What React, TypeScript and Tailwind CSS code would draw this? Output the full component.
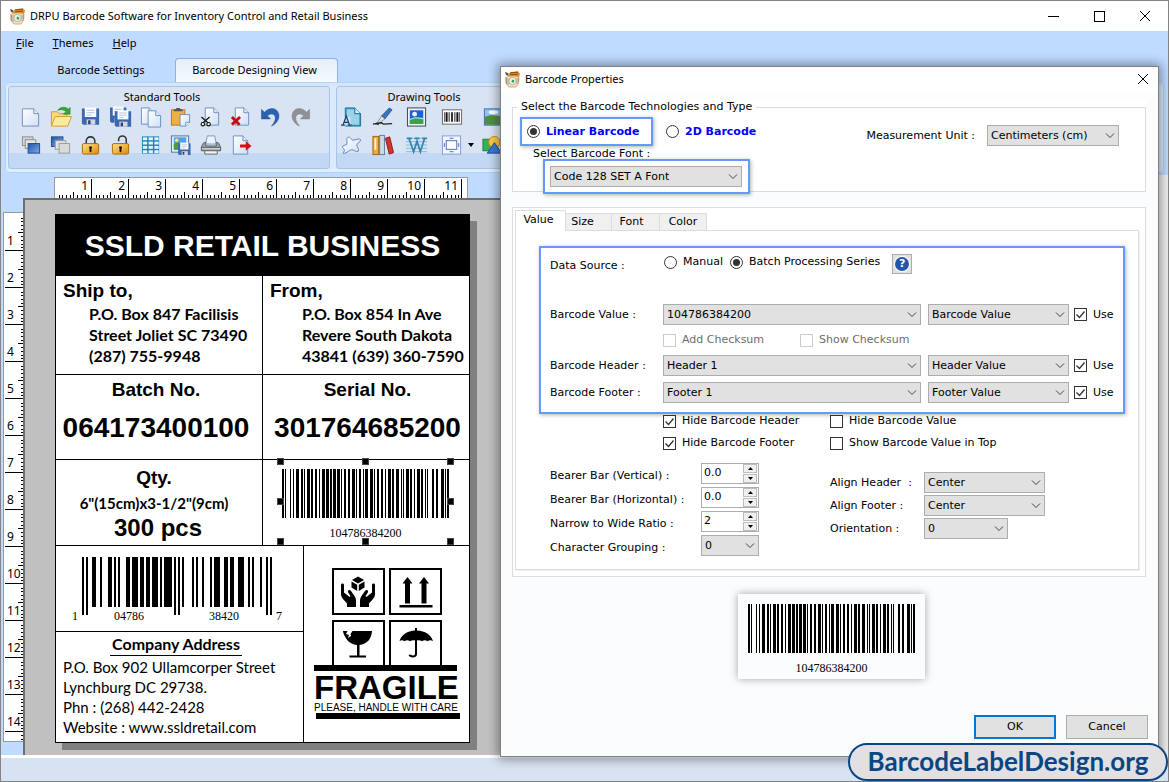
import React, { useId } from "react";

const DIALOG_FONT = "font-['DejaVu_Sans',Verdana,sans-serif]";
const UI_FONT = "font-['Noto_Sans','Open_Sans',sans-serif]";

/* ---------- barcodes ---------- */

const CODE128_DIGITS = [
  "123122", "123221", "223211", "221132", "221231",
  "213212", "223112", "312131", "311222", "321122",
];

function code128Bars(value: string) {
  const pattern =
    "211412" + value.split("").map((d) => CODE128_DIGITS[Number(d)]).join("") + "111422" + "2331112";
  const bars: { x: number; w: number }[] = [];
  let x = 0;
  pattern.split("").forEach((c, i) => {
    const w = Number(c);
    if (i % 2 === 0) bars.push({ x, w });
    x += w;
  });
  return { bars, width: x };
}

function Code128({ value }: { value: string }) {
  const { bars, width } = code128Bars(value);
  return (
    <figure className="flex flex-col items-center">
      <svg width={width} height="49" shapeRendering="crispEdges" aria-hidden="true">
        {bars.map((b) => (
          <rect key={b.x} x={b.x} y="0" width={b.w} height="49" fill="#000" />
        ))}
      </svg>
      <figcaption className="mt-2 font-['Liberation_Serif',serif] text-[12px] leading-[14px] text-black">
        {value}
      </figcaption>
    </figure>
  );
}

const UPC_LEFT = [
  "0001101", "0011001", "0010011", "0111101", "0100011",
  "0110001", "0101111", "0111011", "0110111", "0001011",
];

function UpcA({ value }: { value: string }) {
  const left = value.slice(0, 6).split("").map((d) => UPC_LEFT[Number(d)]).join("");
  const right = value
    .slice(6)
    .split("")
    .map((d) => UPC_LEFT[Number(d)].replace(/[01]/g, (b) => (b === "0" ? "1" : "0")))
    .join("");
  const modules = "101" + left + "01010" + right + "101";
  const isGuard = (i: number) => i < 3 || i > 91 || (i > 44 && i < 50);
  return (
    <figure className="flex w-[210px] flex-col">
      <svg className="self-center" width="190" height="58" shapeRendering="crispEdges" aria-hidden="true">
        {modules.split("").map((m, i) =>
          m === "1" ? (
            <rect key={i} x={i * 2} y="0" width="2" height={isGuard(i) ? 58 : 50} fill="#000" />
          ) : null
        )}
      </svg>
      <figcaption className="-mt-[6px] grid grid-cols-[14px_1fr_1fr_14px] font-['Liberation_Serif',serif] text-[12px] leading-[14px]">
        <span>{value[0]}</span>
        <span className="pl-7">{value.slice(1, 6)}</span>
        <span className="pl-8">{value.slice(6, 11)}</span>
        <span className="text-right">{value[11]}</span>
      </figcaption>
    </figure>
  );
}

/* ---------- icons ---------- */

function AppIcon() {
  return (
    <svg width="17" height="17" viewBox="0 0 17 17" aria-hidden="true">
      <path d="M1 1l3 1 1 3-3-1z" fill="#555" />
      <path d="M4 3l3-2 7-.5 2 2-1 4-10 1z" fill="#e0901f" />
      <path d="M6 2l8-1M6 4l8-1" stroke="#8a4b08" strokeWidth="1" />
      <path d="M1.500 6.500c3-2 11-2 13.500 0l-.5 6-2.500 3.500H5L2 12.500z" fill="#f3e3be" stroke="#d59a4c" strokeWidth=".8" />
      <path d="M2.500 7v6M4 7v7M13 7v6M14.500 7v4" stroke="#8f8f86" strokeWidth=".8" />
      <circle cx="8.500" cy="10" r="3.700" fill="#eef1ea" stroke="#a3a39b" strokeWidth=".8" />
      <path d="M8 8.500l2.500 1-1 2.500-2-1z" fill="#3f9b52" />
    </svg>
  );
}

function Defs() {
  return (
    <svg width="0" height="0" className="absolute" aria-hidden="true">
      <defs>
        <linearGradient id="paper" x1="0" y1="0" x2="1" y2="1">
          <stop offset="0" stopColor="#fff" />
          <stop offset="1" stopColor="#cfe0f5" />
        </linearGradient>
        <linearGradient id="blue" x1="0" y1="0" x2="1" y2="1">
          <stop offset="0" stopColor="#1f56a5" />
          <stop offset="1" stopColor="#7fa9e6" />
        </linearGradient>
        <linearGradient id="gold" x1="0" y1="0" x2="1" y2="1">
          <stop offset="0" stopColor="#ffe08a" />
          <stop offset="1" stopColor="#e08a00" />
        </linearGradient>
      </defs>
    </svg>
  );
}

const sheet = (x: number, y: number, w: number, h: number) => (
  <>
    <path
      d={`M${x} ${y}h${w - 5}l5 5v${h - 5}h-${w}z`}
      fill="url(#paper)"
      stroke="#6c8fc0"
    />
    <path d={`M${x + w - 5} ${y}v5h5`} fill="#e4eefa" stroke="#6c8fc0" />
  </>
);

const floppy = (x: number, y: number, s: number) => (
  <g transform={`translate(${x} ${y}) scale(${s})`}>
    <path d="M0 1h18v17H1.500L0 16.500z" fill="#3c67b1" />
    <path d="M3 0h12v10H3z" fill="#f7faff" />
    <path d="M5 3h8M5 5.500h8M5 8h5" stroke="#b3c3da" />
    <path d="M5 12.500h9V18H5z" fill="#d4d8de" />
    <path d="M6.500 13.500h2.500v4H6.500z" fill="#2a3f68" />
  </g>
);

const padlock = (open: boolean) => (
  <>
    <path
      d={open ? "M9 7V5.500a4 4 0 0 1 8 0V10" : "M6.500 10V7a4.500 4.500 0 0 1 9 0v3"}
      fill="none"
      stroke="#333"
      strokeWidth="1.600"
    />
    <rect x="2.500" y="9.500" width="17" height="11" rx="1.500" fill="url(#gold)" stroke="#a76a07" />
    <path d="M10 13h2v1h-.5v4h-1v-4H10z" fill="#111" stroke="#111" />
  </>
);

const ICONS: Record<string, React.ReactNode> = {
  New: sheet(2.5, 2.5, 17, 18),
  Open: (
    <>
      <path d="M1.500 20V5.500h6l2 2h8V20z" fill="#ffd970" stroke="#c79a33" />
      <path d="M1.500 20.500l4-10h17l-4 10z" fill="#ffe9a3" stroke="#d0a030" />
      <path d="M8 4c3-4 9-4 11-1l2-2v7h-7l2.500-2.500C15 3 11 3 8 4z" fill="#3aa63a" stroke="#1f7a25" strokeWidth=".6" />
    </>
  ),
  Save: floppy(2, 1, 1),
  "Save all": (
    <>
      {floppy(0, 0, 0.95)}
      {floppy(5, 4, 0.95)}
    </>
  ),
  Copy: (
    <>
      {sheet(1.5, 1.5, 13, 17)}
      {sheet(8.5, 4.5, 13, 17)}
    </>
  ),
  Paste: (
    <>
      <rect x="1.500" y="3.500" width="14" height="16" fill="#f0b040" stroke="#b5781c" />
      <path d="M4 5V3h2.500V1.500h4V3H13v2z" fill="#555" />
      <path d="M10.500 8.500h10v8l-4 4h-6z" fill="url(#paper)" stroke="#6c8fc0" />
      <path d="M20.500 16.500h-4v4" fill="#fff" stroke="#6c8fc0" />
    </>
  ),
  Cut: (
    <>
      {sheet(5.5, 1.5, 14, 18)}
      <path d="M1.500 11l8 7M10 11l-8 7" stroke="#111" strokeWidth="1.300" />
      <circle cx="3" cy="18.500" r="1.800" fill="#fff" stroke="#111" strokeWidth="1.200" />
      <circle cx="9" cy="18.500" r="1.800" fill="#fff" stroke="#111" strokeWidth="1.200" />
    </>
  ),
  Delete: (
    <>
      {sheet(5.5, 1.5, 14, 18)}
      <path d="M2 11l8 8M10.500 11l-8.500 8" stroke="#c40d12" strokeWidth="3" />
    </>
  ),
  Undo: (
    <path d="M1.500 3v10h9.500l-3.200-3.300c3-2.800 8-2.400 8.200 2.300.1 3-2 6-4 8.500 5.500-2.500 9-8 7.500-13C17.500 1 9.500.5 4.800 6z" fill="#2b62b0" stroke="#1e4d92" strokeWidth=".5" />
  ),
  Redo: (
    <path d="M20.500 3v10H11l3.200-3.300c-3-2.800-8-2.400-8.200 2.300-.1 3 2 6 4 8.500-5.500-2.500-9-8-7.500-13C4.500 1 12.500.5 17.200 6z" fill="#8f9194" stroke="#7a7c80" strokeWidth=".5" />
  ),
  "Bring to front": (
    <>
      <rect x="2.500" y="2.500" width="11" height="9" fill="#d5d5d5" stroke="#8c8c8c" />
      <rect x="5.500" y="5.500" width="11" height="9" fill="#e3e3e3" stroke="#8c8c8c" />
      <rect x="8.500" y="9.500" width="12" height="10" fill="url(#blue)" stroke="#1c4b93" />
    </>
  ),
  "Send to back": (
    <>
      <rect x="1.500" y="2.500" width="12" height="10" fill="url(#blue)" stroke="#1c4b93" />
      <rect x="5.500" y="6.500" width="11" height="9" fill="#e3e3e3" stroke="#9a9a9a" />
      <rect x="9.500" y="9.500" width="11" height="10" fill="#dadada" stroke="#9a9a9a" />
    </>
  ),
  Lock: padlock(false),
  Unlock: padlock(true),
  Grid: (
    <>
      <rect x="2" y="2" width="18" height="18" fill="#1f86b4" />
      {[3, 7.5, 12, 16.5].map((y) =>
        [3, 9, 15].map((x) => <rect key={`${x}-${y}`} x={x} y={y} width="4.500" height="3" fill="#dff4ff" />)
      )}
    </>
  ),
  "Export image": (
    <>
      <rect x="1.500" y="1.500" width="18" height="17" fill="#e8eef6" stroke="#4a6ea8" />
      <rect x="4" y="3" width="13" height="13" fill="#4fa3e6" />
      <path d="M4 10l4-2 4 3 5-1v6H4z" fill="#4f9a3c" />
      <circle cx="7" cy="6" r="1.800" fill="#ffe45c" />
      {floppy(8.5, 8.5, 0.72)}
    </>
  ),
  Print: (
    <>
      <path d="M6 10L7.500 1.500h8L17 10z" fill="#e9f2fd" stroke="#7f99bf" />
      <path d="M3.500 9l-2 4v4h20v-4l-2-4-2.500-1v4H6V8z" fill="#9a9ea5" stroke="#5e636b" />
      <path d="M1.500 13.500h20v3h-20z" fill="#c9cdd3" stroke="#5e636b" />
      <path d="M5 17h13v3.500H5z" fill="#f3f3f3" stroke="#666" />
    </>
  ),
  Exit: (
    <>
      {sheet(3.5, 1.5, 15, 19)}
      <path d="M10.500 10.500h6V7l6 5-6 5v-3.500h-6z" fill="#d01216" />
    </>
  ),
  Text: (
    <>
      <path d="M4.500 1.500h10l6 6v13h-16z" fill="#3f9fc8" stroke="#1f7096" />
      <path d="M6 3h8v5h5v11H6z" fill="#a9dcf0" opacity=".85" />
      <path d="M14.500 1.500v6h6" fill="#d6f1fb" stroke="#1f7096" />
      <path d="M0 11h10v9H0z" fill="#dcebf8" opacity=".75" />
      <path d="M2 19.500L5.500 10l3.500 9.500M3.500 16.500h4M0 19.500h4M7 19.500h4" fill="none" stroke="#163f6b" strokeWidth="1.300" />
    </>
  ),
  Pencil: (
    <>
      <path d="M10 10L18 1.500l3 2L13.500 13z" fill="#3b73c2" stroke="#1b3f77" strokeWidth=".7" />
      <path d="M10 10l3.500 3L7 17.500 5.500 17z" fill="#e4e4e4" stroke="#555" strokeWidth=".6" />
      <path d="M1 18.500l9-1.500 2 1.500 9-.5M4 17.500l3 1.500" fill="none" stroke="#222" strokeWidth="1.400" />
    </>
  ),
  Picture: (
    <>
      <rect x="1.500" y="1.500" width="19" height="19" fill="#eef1f5" stroke="#37424f" />
      <rect x="4" y="4" width="14" height="14" fill="#1b62d6" />
      <path d="M4 14c4-3 9-2 14-1v5H4z" fill="#3da33c" />
      <path d="M4 13c4-2.500 9-2 14-1v1.500c-5-1-10-1.500-14 1z" fill="#9be0f5" />
      <circle cx="9" cy="8" r="2.500" fill="#eaf6ff" />
    </>
  ),
  Barcode: (
    <>
      <rect x="1.500" y="3.500" width="20" height="15" fill="#fff" stroke="#666" />
      <path d="M4 6v10M8.500 6v10M14.500 6v10M19 6v10" stroke="#111" strokeWidth="1" />
      <path d="M6 6v10M11.500 6v10M17 6v10" stroke="#111" strokeWidth="1.800" />
    </>
  ),
  Gallery: (
    <>
      <rect x="2.500" y="2.500" width="19" height="17" fill="#8cc8f0" stroke="#3c6ea8" />
      <path d="M3 11c5-3 12-2 18 0v8H3z" fill="#4f8f3d" />
      <ellipse cx="12" cy="6" rx="5" ry="2" fill="#fff" />
      <ellipse cx="19" cy="14" rx="4" ry="2.500" fill="#777" />
    </>
  ),
  Freeform: (
    <path d="M2 19.500c2-2 2-4-.5-6 0-2.500 3-2 4.500-3 1-3-1-6 1-7.500 3-1.500 3.500 3 5.500 3 2.500 0 6-2.500 8-.5.500 2.500-4 3-4 5.500 0 2 3 4.500 1.500 6.500-2.500 1.500-4.500-2-7-1.500-3 .5-6.500 5-9 3.500z" fill="url(#paper)" stroke="#5b83c4" />
  ),
  Library: (
    <>
      <rect x="1" y="2" width="6" height="19" fill="#f4a73b" stroke="#a56209" />
      <rect x="2.500" y="4" width="2" height="12" fill="#fff3d6" />
      <rect x="8" y="1" width="5" height="20" fill="#cdd9ee" stroke="#6678a0" />
      <path d="M14 4l4.500-1.500L22.500 19l-4.500 1.500z" fill="#d0352d" stroke="#8c1c16" />
    </>
  ),
  Watermark: (
    <>
      <path d="M0 4h22M0 7.500h22M0 11h22M0 14.500h22M0 18h22" stroke="#7cbcdc" />
      <path d="M3 4l5 14 3.500-11L15 18l4.500-14M1 4h5M9 4h5M17 4h5" fill="none" stroke="#3187ad" strokeWidth="1.800" />
    </>
  ),
  Frame: (
    <>
      <rect x="1.500" y="1.500" width="19" height="19" fill="#f3f7fd" stroke="#7f9fd0" />
      <rect x="5.500" y="6.500" width="11" height="9" fill="#fff" stroke="#4f6f9e" />
      <path d="M9 4h4M9 18h4M3.500 9v4M18.500 9v4" stroke="#4f6f9e" strokeWidth="1" />
    </>
  ),
  Shapes: (
    <>
      <rect x="1" y="5" width="9" height="12" fill="#37b257" stroke="#1f7b37" />
      <circle cx="13" cy="8" r="6" fill="#ffca45" stroke="#c48a10" />
      <path d="M13 8.500L20.500 19.500h-15z" fill="#3f78d6" stroke="#1e4d9c" />
    </>
  ),
};

function ToolButton({ name, menu = false }: { name: string; menu?: boolean }) {
  return (
    <button type="button" aria-label={name} className="relative flex h-7 items-center justify-center">
      <svg width="22" height="22" viewBox="0 0 23 22" aria-hidden="true">
        {ICONS[name]}
      </svg>
      {menu && (
        <svg className="absolute right-[-5px] top-3" width="6" height="4" aria-hidden="true">
          <path d="M0 0h6L3 4z" fill="#000" />
        </svg>
      )}
    </button>
  );
}

/* ---------- main window ---------- */

function TitleBar() {
  const control = "flex w-[46px] items-center justify-center";
  return (
    <header className="flex h-[30px] bg-white">
      <div className="flex items-center gap-1 pl-2">
        <AppIcon />
        <h1 className={`${UI_FONT} text-[11px] text-black`}>
          DRPU Barcode Software for Inventory Control and Retail Business
        </h1>
      </div>
      <div className="ml-auto flex">
        <button type="button" aria-label="Minimize" className={control}>
          <svg width="11" height="11" shapeRendering="crispEdges"><path d="M0 5.500h11" stroke="#000" /></svg>
        </button>
        <button type="button" aria-label="Maximize" className={control}>
          <svg width="11" height="11" shapeRendering="crispEdges"><path d="M.5.500h10v10H.5z" fill="none" stroke="#000" /></svg>
        </button>
        <button type="button" aria-label="Close window" className={control}>
          <svg width="12" height="12"><path d="M1 1l10 10M11 1L1 11" stroke="#000" /></svg>
        </button>
      </div>
    </header>
  );
}

function MenuBar() {
  return (
    <nav className={`${UI_FONT} flex h-6 items-center gap-[19px] pl-[15px] text-[11px] text-black`}>
      <button type="button"><u>F</u>ile</button>
      <button type="button"><u>T</u>hemes</button>
      <button type="button"><u>H</u>elp</button>
    </nav>
  );
}

function ToolGroup({
  title,
  className,
  titleClass = "",
  children,
}: {
  title: string;
  className: string;
  titleClass?: string;
  children: React.ReactNode;
}) {
  return (
    <section
      className={`${className} rounded-[3px] border border-[#a5c4ec] bg-linear-to-b from-[#d8e4f3] from-82% to-[#c3d8f2] to-82%`}
    >
      <h2 className={`${UI_FONT} ${titleClass} h-4 text-center text-[11px] leading-5 text-black`}>{title}</h2>
      {children}
    </section>
  );
}

const STANDARD_TOOLS = [
  "New", "Open", "Save", "Save all", "Copy", "Paste", "Cut", "Delete", "Undo", "Redo",
  "Bring to front", "Send to back", "Lock", "Unlock", "Grid", "Export image", "Print", "Exit",
];
const DRAWING_TOOLS = [
  "Text", "Pencil", "Picture", "Barcode", "Gallery",
  "Freeform", "Library", "Watermark", "Frame", "Shapes",
];

function Ribbon() {
  return (
    <>
      <div className={`${UI_FONT} mt-[3px] flex h-6 pl-10 text-[11px] text-black`} role="tablist">
        <button type="button" role="tab" aria-selected="false" className="w-[120px]">
          Barcode Settings
        </button>
        <button
          type="button"
          role="tab"
          aria-selected="true"
          className="ml-[14px] w-[163px] rounded-t-[4px] border border-b-0 border-[#8db2e3] bg-linear-to-b from-[#e6eefb] to-[#f6faff] pr-1"
        >
          Barcode Designing View
        </button>
      </div>
      <div className="mx-1 flex h-[91px] gap-[6px] rounded-[4px] border-y-4 border-x-3 border-[#e0edfd] border-t-[#d6e6fa] bg-[#dcebfc] outline-1 -outline-offset-1 outline-[#b5d1f5]">
        <ToolGroup title="Standard Tools" className="w-[322px] shrink-0" titleClass="pr-[14px]">
          <div className="grid grid-cols-[repeat(10,30px)] pl-[7px]">
            {STANDARD_TOOLS.map((name) => (
              <ToolButton key={name} name={name} />
            ))}
          </div>
        </ToolGroup>
        <ToolGroup title="Drawing Tools" className="w-[176px] shrink-0">
          <div className="grid grid-cols-[30px_32px_36px_34px_48px]">
            {DRAWING_TOOLS.map((name) => (
              <ToolButton key={name} name={name} menu={name === "Frame"} />
            ))}
          </div>
        </ToolGroup>
      </div>
    </>
  );
}

const TICKS = [4, 7, 11, 15, 18, 22, 26, 30, 33];

function TopRuler() {
  return (
    <div className={`${UI_FONT} ml-[53px] flex h-[21px] w-[414px] overflow-hidden border border-b-0 border-[#9a9a9a] bg-white text-black`}>
      {Array.from({ length: 11 }, (_, i) => (
        <div key={i} className="relative w-[37px] shrink-0 pt-px pr-1 text-right text-[12px] leading-[14px]">
          {i + 1}
          <svg className="absolute inset-0" width="37" height="20" shapeRendering="crispEdges" aria-hidden="true">
            {TICKS.map((t) => (
              <path key={t} d={`M${t + 0.5} ${t === 18 ? 14 : 17}V20`} stroke="#000" />
            ))}
            <path d="M36.500 1V20" stroke="#000" />
          </svg>
        </div>
      ))}
    </div>
  );
}

function SideRuler() {
  return (
    <div className={`${UI_FONT} mt-[14px] ml-[2px] h-[530px] w-5 overflow-hidden border border-r-0 border-[#9a9a9a] bg-white pt-px text-black`}>
      {Array.from({ length: 14 }, (_, i) => (
        <div key={i} className="relative flex h-[37px] items-end pb-[3px] pl-[3px] text-[12px] leading-[14px]">
          {i + 1}
          <svg className="absolute inset-0" width="19" height="37" shapeRendering="crispEdges" aria-hidden="true">
            {TICKS.map((t) => (
              <path key={t} d={`M${t === 18 ? 14 : 17} ${t + 0.5}H19`} stroke="#000" />
            ))}
            <path d="M1 36.500H19" stroke="#000" />
          </svg>
        </div>
      ))}
      <svg width="19" height="10" shapeRendering="crispEdges" aria-hidden="true">
        <path d="M17 3.500H19M17 7.500H19" stroke="#000" />
      </svg>
    </div>
  );
}

/* ---------- shipping label ---------- */

function PartyCell({ title, lines, indent }: { title: string; lines: string[]; indent: string }) {
  return (
    <div className="h-full pl-[7px] pt-[2px]">
      <h4 className="text-[19px] font-bold leading-[25px]">{title}</h4>
      <p className={`${indent} whitespace-nowrap font-[Lato,sans-serif] text-[16px] font-bold leading-[21px]`}>
        {lines.map((l) => (
          <span key={l} className="block">{l}</span>
        ))}
      </p>
    </div>
  );
}

function NumberCell({ title, value, className }: { title: string; value: string; className: string }) {
  return (
    <div className={`pt-[3px] text-center font-bold ${className}`}>
      <h4 className="text-[19px] leading-6">{title}</h4>
      <p className="mt-[10px] text-[28px] leading-8">{value}</p>
    </div>
  );
}

const HANDLES = [
  "-left-1 -top-1", "left-1/2 -ml-1 -top-1", "-right-1 -top-1",
  "-left-1 top-1/2 -mt-1", "-right-1 top-1/2 -mt-1",
  "-left-1 -bottom-1", "left-1/2 -ml-1 -bottom-1", "-right-1 -bottom-1",
];

function HandlingSymbols() {
  return (
    <svg width="110" height="98" viewBox="0 0 110 98" aria-label="Handling symbols" role="img">
      <g fill="none" stroke="#000" strokeWidth="2">
        <path d="M1 1h51v45H1zM58 1h51v45H58zM1 53h51v45H1zM58 53h51v45H58z" />
      </g>
      <g fill="#000">
        <path d="M26 8.500l6 3.500-6 3.500-6-3.500zM19.500 13.500l5.700 3.300v6.200l-5.700-3.500zM32.500 13.500l-5.700 3.300v6.200l5.700-3.500z" />
        <path d="M12 17c0-2-3-2-3 0v9c0 2 .8 3.500 2 5l4 4.500V39h9v-6c0-2-.5-3.500-1.500-5L19 23c-1.500-1.800-4-.6-2.800 1.500l2.300 3.700-.8.800-5.700-4.500z" />
        <path d="M40 17c0-2 3-2 3 0v9c0 2-.8 3.500-2 5l-4 4.500V39h-9v-6c0-2 .5-3.500 1.500-5l3.500-5c1.500-1.800 4-.6 2.800 1.500l-2.300 3.700.8.800 5.700-4.500z" />
        <path d="M75.500 9l5 6.500H78v20h-5v-20h-2.500zM92 9l5 6.500h-2.500v20h-5v-20H87zM67.500 37h33v2.600h-33z" />
        <path d="M11 63h4.500l-1.500 3 3 1-1 3 3-2-.5-2 2-3H40c-.5 8-5 13-12.500 14v10.500H34v2H17.500v-2H25V77c-5-.7-9-3-11.500-7.500C12 67 11.200 65 11 63z" />
        <path d="M83 62.500V60h2v2.500c8 .6 14 4 16 10.500-2-1.200-4-1-5.500.3-1.500-1.500-4-1.500-5.500 0-1.200-.8-3-1.200-5-.8v13.800c0 4-7.500 4.500-8.500.5h2.500c.8 1.300 4 1 4-1V72.500c-2-.4-3.800 0-5 .8-1.500-1.500-4-1.500-5.500 0-1.500-1.300-3-1.500-5-.3 2-6.500 8-10 15.500-10.500z" />
      </g>
    </svg>
  );
}

function ShippingLabel() {
  return (
    <article className="w-[415px] border border-black bg-white font-['Liberation_Sans',Arial,sans-serif] text-black shadow-[7px_7px_0_#808080]">
      <h3 className="flex h-[61px] items-center justify-center bg-black text-[30px] font-bold leading-8 text-white">
        SSLD RETAIL BUSINESS
      </h3>
      <div className="grid grid-cols-[207px_1fr]">
        <div className="h-[99px] border-r border-b border-black">
          <PartyCell
            title="Ship to,"
            lines={["P.O. Box 847 Facilisis", "Street Joliet SC 73490", "(287) 755-9948"]}
            indent="pl-[26px]"
          />
        </div>
        <div className="border-b border-black">
          <PartyCell
            title="From,"
            lines={["P.O. Box 854 In Ave", "Revere South Dakota", "43841 (639) 360-7590"]}
            indent="pl-8"
          />
        </div>
        <div className="h-[85px] border-r border-b border-black">
          <NumberCell title="Batch No." value="064173400100" className="pr-[6px]" />
        </div>
        <div className="border-b border-black">
          <NumberCell title="Serial No." value="301764685200" className="pl-[3px]" />
        </div>
        <div className="h-[86px] border-r border-b border-black pr-[10px] pt-[6px] text-center font-bold">
          <h4 className="text-[19px] leading-6">Qty.</h4>
          <p className="font-[Lato,sans-serif] text-[15px] leading-[26px]">6&quot;(15cm)x3-1/2&quot;(9cm)</p>
          <p className="pl-2 text-[24px] leading-6">300 pcs</p>
        </div>
        <div className="flex justify-center border-b border-black pr-px pt-[2px]">
          <div className="relative flex h-[79px] w-[169px] justify-center pt-[7px]">
            <Code128 value="104786384200" />
            {HANDLES.map((pos) => (
              <span key={pos} className={`absolute size-[7px] border border-[#444] bg-black ${pos}`} />
            ))}
          </div>
        </div>
      </div>
      <div className="grid grid-cols-[248px_1fr]">
        <div className="border-r border-black">
          <div className="flex h-[86px] border-b border-black pl-4 pt-[11px]">
            <UpcA value="104786384207" />
          </div>
          <div className="h-[110px] pl-[7px] pt-px font-[Lato,sans-serif]">
            <h4 className="ml-[47px] w-[132px] border-b border-black text-center text-[16px] font-bold leading-[22px]">
              Company Address
            </h4>
            <p className="mt-px whitespace-nowrap text-[15px] leading-5">
              P.O. Box 902 Ullamcorper Street
              <br />
              Lynchburg DC 29738.
              <br />
              Phn : (268) 442-2428
              <br />
              Website : www.ssldretail.com
            </p>
          </div>
        </div>
        <div className="flex flex-col pl-[10px] pt-[22px]">
          <div className="h-[97px] pl-[18px]">
            <HandlingSymbols />
          </div>
          <div className="h-[6px] w-[143px] bg-black" />
          <p className="mt-px text-[33px] font-bold leading-[31px]">FRAGILE</p>
          <p className="whitespace-nowrap text-[10px] leading-[10px]">PLEASE, HANDLE WITH CARE</p>
          <div className="ml-[2px] h-[6px] w-[144px] bg-black" />
        </div>
      </div>
    </article>
  );
}

/* ---------- dialog controls ---------- */

function Select({ id, value, className, label }: { id?: string; value: string; className: string; label?: string }) {
  return (
    <span className={`relative block h-[21px] ${className}`}>
      <select
        id={id}
        aria-label={label}
        defaultValue={value}
        className="h-full w-full appearance-none border border-[#adadad] bg-[#e1e1e1] pl-[3px] pr-5 text-[11px] text-black"
      >
        <option>{value}</option>
      </select>
      <svg className="pointer-events-none absolute right-[4px] top-2" width="10" height="6" aria-hidden="true">
        <path d="M1 .5l4 4 4-4" fill="none" stroke="#444" />
      </svg>
    </span>
  );
}

function Check({ label, checked = false, disabled = false }: { label: string; checked?: boolean; disabled?: boolean }) {
  return (
    <label className={`flex items-center gap-[6px] whitespace-nowrap ${disabled ? "text-[#6d6d6d]" : "text-black"}`}>
      <span className="grid size-[13px] shrink-0">
        <input
          type="checkbox"
          defaultChecked={checked}
          disabled={disabled}
          className="col-start-1 row-start-1 size-[13px] appearance-none border border-[#333] bg-white disabled:border-[#ccc]"
        />
        {checked && (
          <svg className="pointer-events-none col-start-1 row-start-1" width="13" height="13" aria-hidden="true">
            <path d="M2.500 6.500l3 3 5-6" fill="none" stroke="#333" strokeWidth="1.300" />
          </svg>
        )}
      </span>
      {label}
    </label>
  );
}

function Radio({ label, name, checked = false }: { label: string; name: string; checked?: boolean }) {
  return (
    <label className="flex items-center gap-[6px] whitespace-nowrap">
      <span className="grid size-[13px] shrink-0">
        <input
          type="radio"
          name={name}
          defaultChecked={checked}
          className="col-start-1 row-start-1 size-[13px] appearance-none rounded-full border border-[#333] bg-white"
        />
        {checked && (
          <span className="pointer-events-none col-start-1 row-start-1 size-[7px] place-self-center rounded-full bg-[#333]" />
        )}
      </span>
      {label}
    </label>
  );
}

function Spinner({ id, value }: { id: string; value: string }) {
  const btn = "flex h-[9px] w-[14px] items-center justify-center border border-[#bcbcbc] bg-[#f0f0f0]";
  return (
    <span className="flex h-[21px] w-[58px] border border-[#abadb3] bg-white">
      <input id={id} defaultValue={value} className="h-[17px] w-0 flex-1 pl-[2px] text-[11px] text-black" />
      <span className="mr-px flex flex-col gap-px">
        <button type="button" aria-label="Increase" className={btn}>
          <svg width="5" height="3"><path d="M0 3h5L2.500 0z" fill="#000" /></svg>
        </button>
        <button type="button" aria-label="Decrease" className={btn}>
          <svg width="5" height="3"><path d="M0 0h5L2.500 3z" fill="#000" /></svg>
        </button>
      </span>
    </span>
  );
}

const HIGHLIGHT = "border-2 border-[#6699ff] bg-white shadow-[1px_1px_4px_rgba(0,0,0,0.3)]";

function ValueRow({ label, value, source }: { label: string; value: string; source: string }) {
  const id = useId();
  return (
    <div className="flex items-center">
      <label htmlFor={id} className="w-[113px] shrink-0">{label}</label>
      <Select id={id} value={value} className="min-w-0 flex-1" />
      <Select label={`${label} source`} value={source} className="ml-[7px] w-[141px] shrink-0" />
      <div className="ml-[5px] w-[49px] shrink-0">
        <Check label="Use" checked />
      </div>
    </div>
  );
}

function SpinnerRow({ label, value }: { label: string; value: string }) {
  const id = useId();
  return (
    <div className="flex items-center">
      <label htmlFor={id} className="w-[151px] shrink-0 whitespace-nowrap pt-1">{label}</label>
      <Spinner id={id} value={value} />
    </div>
  );
}

function SelectRow({ label, value, labelClass, width }: { label: string; value: string; labelClass: string; width: string }) {
  const id = useId();
  return (
    <div className="flex items-center">
      <label htmlFor={id} className={`shrink-0 whitespace-pre ${labelClass}`}>{label}</label>
      <Select id={id} value={value} className={width} />
    </div>
  );
}

function ValuePanel() {
  return (
    <div role="tabpanel" className="mr-[6px] mb-[6px] border border-[#dcdcdc] bg-white shadow-[1px_1px_0_#f0f0f0]">
      <div className={`mt-[15px] mr-[13px] ml-[23px] pt-[6px] pb-[9px] pl-[9px] ${HIGHLIGHT}`}>
        <div className="flex h-5 items-start">
          <span className="w-[114px] pt-1">Data Source :</span>
          <div role="radiogroup" aria-label="Data source" className="flex gap-[7px]">
            <Radio name="source" label="Manual" />
            <Radio name="source" label="Batch Processing Series" checked />
          </div>
          <button
            type="button"
            aria-label="Help"
            className="ml-3 flex size-5 items-center justify-center border border-[#adadad] bg-[#e1e1e1]"
          >
            <span className="flex size-[14px] items-center justify-center rounded-full bg-[#2356a8] font-bold text-white ring-1 ring-white">?</span>
          </button>
        </div>
        <div className="mt-[30px]">
          <ValueRow label="Barcode Value :" value="104786384200" source="Barcode Value" />
        </div>
        <div className="grid h-[30px] grid-cols-[137px_auto] items-center pl-[113px]">
          <Check label="Add Checksum" disabled />
          <Check label="Show Checksum" disabled />
        </div>
        <div className="flex flex-col gap-[6px]">
          <ValueRow label="Barcode Header :" value="Header 1" source="Header Value" />
          <ValueRow label="Barcode Footer :" value="Footer 1" source="Footer Value" />
        </div>
      </div>
      <div className="grid grid-cols-[167px_auto] gap-y-2 pl-[147px] leading-[14px]">
        <Check label="Hide Barcode Header" checked />
        <Check label="Hide Barcode Value" />
        <Check label="Hide Barcode Footer" checked />
        <Check label="Show Barcode Value in Top" />
      </div>
      <div className="mt-[13px] flex pb-[13px] pl-[34px]">
        <div className="flex flex-col gap-[3px]">
          <SpinnerRow label="Bearer Bar (Vertical) :" value="0.0" />
          <SpinnerRow label="Bearer Bar (Horizontal) :" value="0.0" />
          <SpinnerRow label="Narrow to Wide Ratio :" value="2" />
          <SelectRow label="Character Grouping :" value="0" labelClass="w-[151px] pt-1" width="w-[58px]" />
        </div>
        <div className="ml-[71px] mt-[9px] flex flex-col gap-[2px]">
          <SelectRow label="Align Header  :" value="Center" labelClass="w-[94px]" width="w-[121px]" />
          <SelectRow label="Align Footer :" value="Center" labelClass="w-[94px]" width="w-[121px]" />
          <SelectRow label="Orientation :" value="0" labelClass="w-[94px]" width="w-[84px]" />
        </div>
      </div>
    </div>
  );
}

function PropertiesDialog() {
  const tab = "h-[17px] border border-l-0 border-b-0 border-[#dcdcdc] bg-[#f0f0f0]";
  return (
    <div
      role="dialog"
      aria-label="Barcode Properties"
      className={`${DIALOG_FONT} absolute top-[65px] right-[9px] bottom-[24px] left-[499px] flex flex-col border border-[#7f7f7f] bg-[#fbfcfe] text-[11px] leading-4 text-black shadow-[0_0_10px_2px_rgba(0,0,0,0.4)]`}
    >
      <div className="flex h-[25px] items-center gap-1 bg-white pb-px pl-[3px]">
        <AppIcon />
        <h2 className={`${UI_FONT} text-[11px]`}>Barcode Properties</h2>
        <button type="button" aria-label="Close dialog" className="ml-auto mr-[9px]">
          <svg width="12" height="12"><path d="M1 1l10 10M11 1L1 11" stroke="#000" /></svg>
        </button>
      </div>

      <div className="mr-3 ml-[11px] mt-2 h-[92px] bg-white">
        <fieldset className="h-full border border-[#dcdcdc]">
          <legend className="ml-1 px-1 leading-[14px]">Select the Barcode Technologies and Type</legend>
          <div className="flex items-start justify-between">
            <div>
              <div className="mt-[3px] ml-[7px] flex items-center gap-[13px] font-bold text-[#0000ff]">
                <div className={`flex h-[29px] w-[133px] items-center px-[5px] ${HIGHLIGHT}`}>
                  <Radio name="technology" label="Linear Barcode" checked />
                </div>
                <Radio name="technology" label="2D Barcode" />
              </div>
              <label htmlFor="barcode-font" className="ml-5 block h-[13px]">Select Barcode Font :</label>
              <div className={`ml-[30px] w-[207px] p-[5px] ${HIGHLIGHT}`}>
                <Select id="barcode-font" value="Code 128 SET A Font" className="w-[192px]" />
              </div>
            </div>
            <div className="mt-[11px] mr-[26px] flex items-center gap-[12px]">
              <label htmlFor="unit">Measurement Unit :</label>
              <Select id="unit" value="Centimeters (cm)" className="w-[132px]" />
            </div>
          </div>
        </fieldset>
      </div>

      <div className="mr-3 ml-[11px] mt-[15px] border border-[#dcdcdc] bg-white pt-[2px] pl-[2px]">
        <div role="tablist" className="flex h-5 items-end">
          <button type="button" role="tab" aria-selected="true" className="relative -mb-px h-[21px] w-[51px] border border-b-0 border-[#dcdcdc] bg-white pr-1 pb-[2px]">
            Value
          </button>
          <button type="button" role="tab" aria-selected="false" className={`${tab} w-[46px] pr-3`}>Size</button>
          <button type="button" role="tab" aria-selected="false" className={`${tab} w-[48px] pr-2`}>Font</button>
          <button type="button" role="tab" aria-selected="false" className={`${tab} w-[47px]`}>Color</button>
        </div>
        <ValuePanel />
      </div>

      <div className="mt-[17px] ml-1 self-center px-[10px] pt-[10px] pb-[4px] shadow-[0_0_8px_rgba(0,0,0,0.35)]">
        <Code128 value="104786384200" />
      </div>

      <div className="mt-auto flex justify-end gap-[10px] pr-[10px] pb-[17px]">
        <button type="button" className="h-6 w-[82px] border-2 border-[#0078d7] bg-[#e1e1e1]">OK</button>
        <button type="button" className="h-6 w-[82px] border border-[#adadad] bg-[#e1e1e1]">Cancel</button>
      </div>
    </div>
  );
}

export default function App() {
  return (
    <div className="relative flex min-h-screen flex-col overflow-hidden border border-[#838383] bg-[#bfdbff]">
      <Defs />
      <TitleBar />
      <MenuBar />
      <Ribbon />
      <main className="mt-[2px] flex flex-1">
        <div className="min-w-0 flex-1">
          <div className="pt-[2px]">
            <TopRuler />
          </div>
          <div className="flex">
            <div className="w-[22px] shrink-0">
              <SideRuler />
            </div>
            <div className="flex-1 border-t-2 border-l-2 border-[#6e6e6e] bg-[#c0c0c0] pt-[14px] pb-3 pl-[30px]">
              <ShippingLabel />
            </div>
          </div>
        </div>
        <div className="w-[10px] bg-[#f0f0f0]" />
      </main>
      <footer className="h-[26px] border-t-3 border-white bg-[#d7e3f2]" />
      <PropertiesDialog />
      <a
        href="https://barcodelabeldesign.org"
        className="absolute right-0 bottom-0 flex h-[38px] w-[320px] items-center justify-center rounded-full border-2 border-[#0b4684] bg-[#e2e0e2] pb-[2px] font-[Lato,sans-serif] text-[26px] font-bold text-[#0b4684]"
      >
        BarcodeLabelDesign.org
      </a>
    </div>
  );
}
